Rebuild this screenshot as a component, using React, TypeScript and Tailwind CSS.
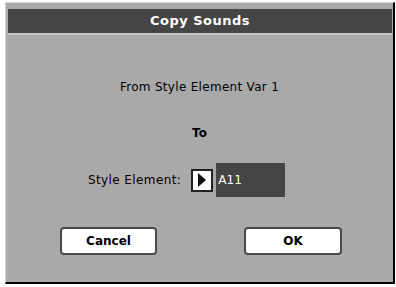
import React from "react";

export default function App() {
  const font = { fontFamily: '"DejaVu Sans", "Liberation Sans", sans-serif' };
  return (
    <div className="w-[396px] h-[287px] bg-white pt-[2px] pl-[5px]" style={font}>
      <div className="w-[390px] h-[282px] bg-[#a9a9a9] border-t border-l border-t-[#d4d4d4] border-l-[#d4d4d4] border-r-2 border-b-2 border-r-black border-b-black flex flex-col">
        <div className="mt-[6px] ml-[2px] mr-[1px] h-[26px] bg-[#454545] border-b-2 border-b-[#c4c4c4] flex items-center justify-center">
          <span className="text-white font-bold text-[13px] tracking-[0.5px]">Copy Sounds</span>
        </div>
        <div className="flex flex-col">
          <div className="self-center mt-[45px] text-[12px] leading-[14px] text-black tracking-[0.3px]">From Style Element Var 1</div>
          <div className="self-center mt-[32px] text-[12px] leading-[14px] font-bold text-black">To</div>
          <div className="mt-[23px] ml-[82px] flex items-center">
            <span className="text-[12px] text-black tracking-[0.4px] mr-[10px]">Style Element:</span>
            <div className="w-[22px] h-[23px] bg-white border-2 border-[#222] flex items-center justify-center">
              <svg width="10" height="14" viewBox="0 0 10 14">
                <polygon points="1,0 9,7 1,14" fill="#111" />
              </svg>
            </div>
            <div className="ml-[3px] w-[69px] h-[34px] bg-[#454545] flex items-center pl-[2px]">
              <span className="text-white text-[12px]">A11</span>
            </div>
          </div>
        </div>
        <div className="mt-[30px] flex">
          <button className="ml-[54px] w-[97px] h-[28px] bg-white border-2 border-[#4a4a4a] rounded-[4px] text-[12px] font-bold text-black">Cancel</button>
          <button className="ml-[87px] w-[98px] h-[28px] bg-white border-2 border-[#4a4a4a] rounded-[4px] text-[12px] font-bold text-black">OK</button>
        </div>
      </div>
    </div>
  );
}
